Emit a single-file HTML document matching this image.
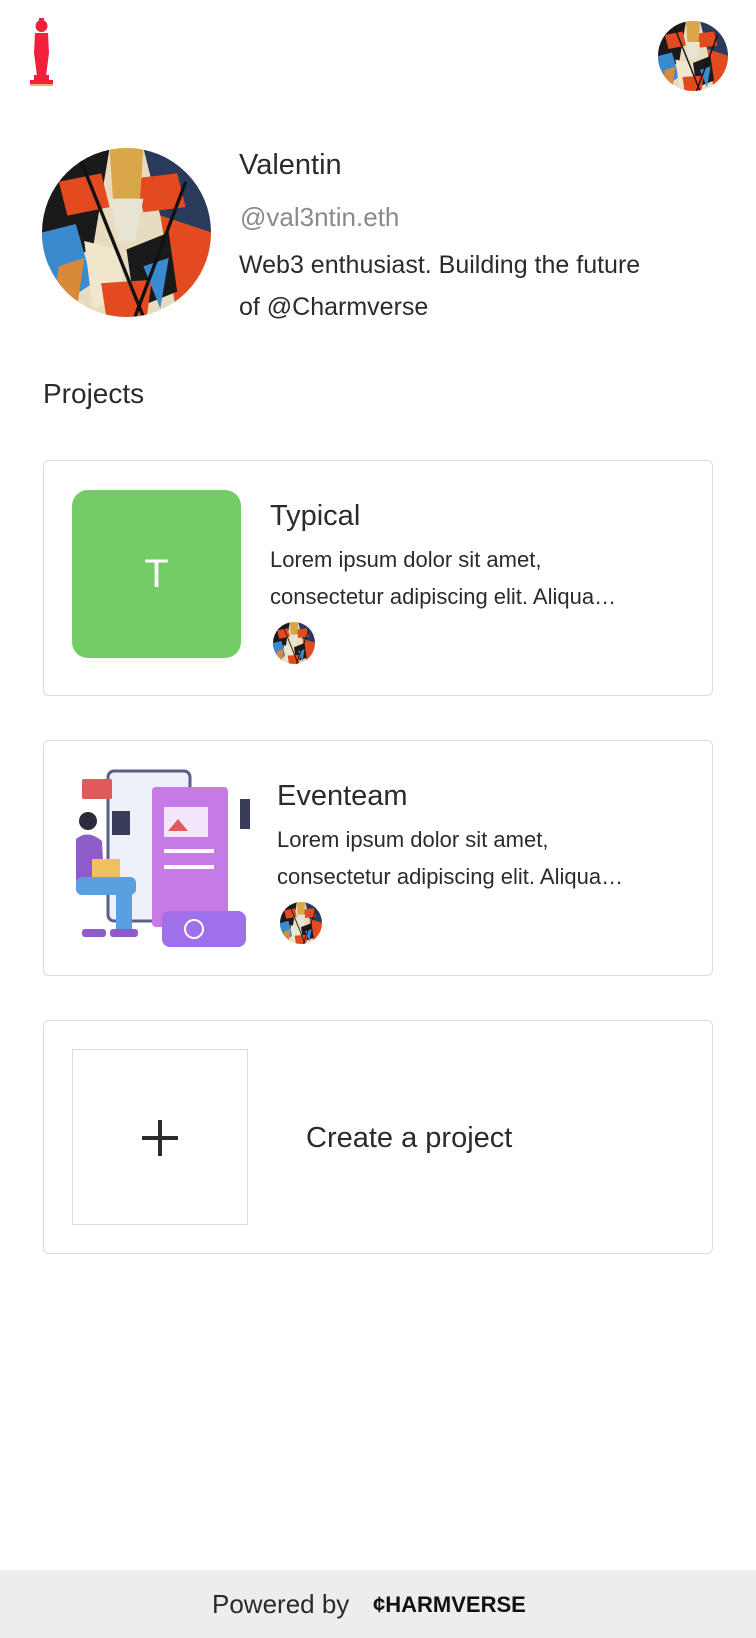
<!DOCTYPE html>
<html><head><meta charset="utf-8"><style>
*{margin:0;padding:0;box-sizing:border-box}
body{width:756px;height:1638px;position:relative;background:#fff;font-family:"Liberation Sans",Arial,sans-serif;color:#2b2b2b;overflow:hidden}
.abs{position:absolute}
.card{position:absolute;left:43px;width:670px;border:1.5px solid #dcdcdc;border-radius:6px;background:#fff}
.lorem{font-size:22px;line-height:37px;color:#2b2b2b;white-space:nowrap}
</style></head><body>
<svg style="display:none"><defs>
<symbol id="art" viewBox="0 0 100 100">
<rect width="100" height="100" fill="#e8dcc0"/>
<polygon points="0,0 40,0 30,60 0,70" fill="#1a1a1a"/>
<polygon points="60,0 100,0 100,50 70,40" fill="#2a3a5a"/>
<polygon points="10,20 35,15 40,35 15,40" fill="#e34a1f"/>
<polygon points="55,18 80,15 85,35 60,38" fill="#e34a1f"/>
<polygon points="40,0 60,0 58,30 42,30" fill="#d9a64a"/>
<polygon points="40,30 60,30 55,55 45,55" fill="#e8e4d4"/>
<polygon points="0,50 20,45 30,80 0,100" fill="#3a8ad0"/>
<polygon points="70,40 100,50 100,100 80,100" fill="#e34a1f"/>
<polygon points="25,55 45,60 50,90 30,95" fill="#efe6cc"/>
<polygon points="50,60 75,50 80,85 55,95" fill="#1a1a1a"/>
<polygon points="35,80 65,78 62,100 38,100" fill="#e34a1f"/>
<polygon points="60,70 75,65 70,95" fill="#3a8ad0"/>
<polygon points="10,70 25,65 20,100 5,100" fill="#d88a3a"/>
<line x1="20" y1="0" x2="60" y2="100" stroke="#111" stroke-width="2"/>
<line x1="85" y1="20" x2="55" y2="100" stroke="#111" stroke-width="2"/>
</symbol></defs></svg>

<svg class="abs" style="left:28px;top:18px" width="27" height="70" viewBox="0 0 27 70">
<circle cx="13.5" cy="8" r="6" fill="#f2203a"/>
<rect x="11" y="0" width="5" height="4" fill="#f2203a"/>
<path d="M7 15 H20 L21 35 L18 58 H9 L6 35Z" fill="#f2203a"/>
<rect x="6" y="57" width="15" height="6" fill="#f2203a"/>
<rect x="2" y="62" width="23" height="6" fill="#f2203a"/>
<rect x="2" y="66" width="23" height="2" fill="#e8b080"/>
</svg>

<svg class="abs" style="left:658px;top:21px" width="70" height="70"><defs><clipPath id="c1"><circle cx="35" cy="35" r="35"/></clipPath></defs><g clip-path="url(#c1)"><use href="#art" width="70" height="70"/></g></svg>

<svg class="abs" style="left:42px;top:148px" width="169" height="169"><defs><clipPath id="c2"><circle cx="84.5" cy="84.5" r="84.5"/></clipPath></defs><g clip-path="url(#c2)"><use href="#art" width="169" height="169"/></g></svg>

<div class="abs" style="left:239px;top:149px;font-size:29px">Valentin</div>
<div class="abs" style="left:240px;top:202px;font-size:26px;color:#8a8a8a">@val3ntin.eth</div>
<div class="abs" style="left:239px;top:244px;font-size:25px;line-height:42px">Web3 enthusiast. Building the future<br>of @Charmverse</div>

<div class="abs" style="left:43px;top:378px;font-size:28px">Projects</div>

<div class="card" style="top:460px;height:236px">
 <div class="abs" style="left:28px;top:29px;width:169px;height:168px;background:#74cc67;border-radius:16px;color:#fff;font-size:40px;display:flex;align-items:center;justify-content:center">T</div>
 <div class="abs" style="left:226px;top:39px;font-size:29px">Typical</div>
 <div class="abs lorem" style="left:226px;top:80px">Lorem ipsum dolor sit amet,<br>consectetur adipiscing elit. Aliqua…</div>
 <svg class="abs" style="left:229px;top:161px" width="42" height="42"><defs><clipPath id="c3"><circle cx="21" cy="21" r="21"/></clipPath></defs><g clip-path="url(#c3)"><use href="#art" width="42" height="42"/></g></svg>
</div>

<div class="card" style="top:740px;height:236px">
 <svg class="abs" style="left:28px;top:28px" width="178" height="178" viewBox="0 0 178 178">
  <rect x="36" y="2" width="82" height="150" rx="6" fill="#eef0fa" stroke="#5a5f8a" stroke-width="3"/>
  <rect x="80" y="18" width="76" height="140" rx="4" fill="#c57ae6"/>
  <rect x="92" y="38" width="44" height="30" fill="#f3e8fb"/>
  <polygon points="96,62 106,50 116,62" fill="#e05a5a"/>
  <rect x="92" y="80" width="50" height="4" fill="#fff"/>
  <rect x="92" y="96" width="50" height="4" fill="#fff"/>
  <rect x="90" y="142" width="84" height="36" rx="8" fill="#a070ea"/>
  <circle cx="122" cy="160" r="9" fill="none" stroke="#fff" stroke-width="2"/>
  <rect x="10" y="10" width="30" height="20" rx="2" fill="#e05a5a"/>
  <rect x="40" y="42" width="18" height="24" fill="#3a3d5a"/>
  <circle cx="16" cy="52" r="9" fill="#2a2a3a"/>
  <path d="M4 70 Q16 60 30 72 L32 110 L4 112Z" fill="#8e5cc8"/>
  <rect x="4" y="108" width="60" height="18" rx="6" fill="#5aa0e0"/>
  <rect x="44" y="110" width="16" height="50" fill="#5aa0e0"/>
  <rect x="20" y="90" width="28" height="18" fill="#f0c060"/>
  <rect x="38" y="160" width="28" height="8" rx="3" fill="#8e5cc8"/>
  <rect x="10" y="160" width="24" height="8" rx="3" fill="#8e5cc8"/>
  <rect x="168" y="30" width="10" height="30" fill="#3a3d5a"/>
 </svg>
 <div class="abs" style="left:233px;top:39px;font-size:29px">Eventeam</div>
 <div class="abs lorem" style="left:233px;top:80px">Lorem ipsum dolor sit amet,<br>consectetur adipiscing elit. Aliqua…</div>
 <svg class="abs" style="left:236px;top:161px" width="42" height="42"><defs><clipPath id="c4"><circle cx="21" cy="21" r="21"/></clipPath></defs><g clip-path="url(#c4)"><use href="#art" width="42" height="42"/></g></svg>
</div>

<div class="card" style="top:1020px;height:234px">
 <div class="abs" style="left:28px;top:28px;width:176px;height:176px;border:1.5px solid #dcdcdc"></div>
 <svg class="abs" style="left:98px;top:99px" width="36" height="36"><rect x="16" y="0" width="4" height="36" fill="#2b2b2b"/><rect x="0" y="16" width="36" height="4" fill="#2b2b2b"/></svg>
 <div class="abs" style="left:262px;top:101px;font-size:29px">Create a project</div>
</div>

<div class="abs" style="left:0;top:1570px;width:756px;height:68px;background:#ededed"></div>
<div class="abs" style="left:212px;top:1589px;font-size:26px;color:#2b2b2b">Powered by</div>
<div class="abs" style="left:373px;top:1592px;font-size:22px;font-weight:bold;color:#111;letter-spacing:0px">¢HARMVERSE</div>
</body></html>
